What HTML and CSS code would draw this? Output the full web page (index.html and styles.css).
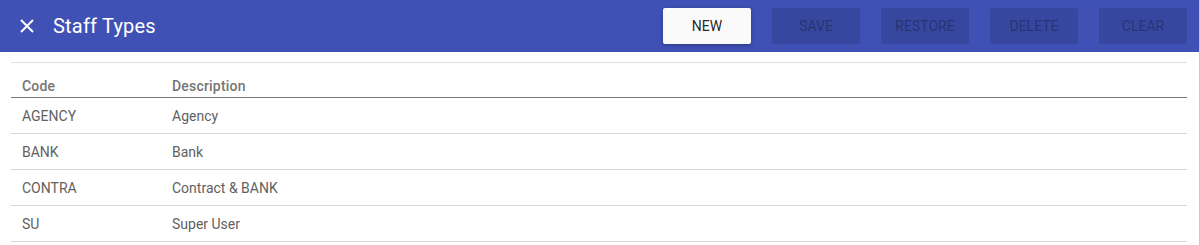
FILE: index.html
```html
<!DOCTYPE html>
<html lang="en">
<head>
    <meta charset="UTF-8">
    <meta name="viewport" content="width=device-width, initial-scale=1.0">
    <title>Staff Types</title>
    <link rel="stylesheet" href="styles.css">
</head>
<body>

<div class="page">
    <div class="toolbar">
        <button class="btn-close" aria-label="Close">
            <svg width="14" height="14" viewBox="0 0 14 14">
                <path d="M1 1 L13 13 M13 1 L1 13" stroke="#fff" stroke-width="2" fill="none"/>
            </svg>
        </button>
        <h1 class="title">Staff Types</h1>
        <div class="actions">
            <button class="btn btn-raised">New</button>
            <button class="btn" disabled>Save</button>
            <button class="btn" disabled>Restore</button>
            <button class="btn" disabled>Delete</button>
            <button class="btn" disabled>Clear</button>
        </div>
    </div>

    <div class="content">
        <table class="grid">
            <thead>
                <tr>
                    <th class="col-code">Code</th>
                    <th>Description</th>
                </tr>
            </thead>
            <tbody>
                <tr><td>AGENCY</td><td>Agency</td></tr>
                <tr><td>BANK</td><td>Bank</td></tr>
                <tr><td>CONTRA</td><td>Contract &amp; BANK</td></tr>
                <tr><td>SU</td><td>Super User</td></tr>
            </tbody>
        </table>
    </div>
</div>

</body>
</html>
```

FILE: styles.css
```css
body {
    margin: 0;
    font-family: Roboto, "Liberation Sans", sans-serif;
    background: #fff;
}
.page {
    width: 1199px;
    height: 245px;
    border-right: 1px solid #c8c8c8;
}
.toolbar {
    display: flex;
    align-items: center;
    height: 52px;
    background-color: #3f51b5;
    padding: 0 12px 0 18px;
    box-sizing: border-box;
}
.btn-close {
    width: 18px;
    height: 18px;
    padding: 0;
    border: none;
    background: none;
    display: flex;
    align-items: center;
    justify-content: center;
}
.title {
    margin: 0 0 0 17px;
    font-size: 20px;
    font-weight: 400;
    letter-spacing: 0.2px;
    color: #fff;
    flex: 1;
}
.actions {
    display: flex;
    gap: 21px;
}
.btn {
    width: 88px;
    height: 36px;
    border: none;
    border-radius: 2px;
    font-family: inherit;
    font-size: 14px;
    font-weight: 400;
    text-transform: uppercase;
    background-color: rgba(0, 0, 0, 0.12);
    color: rgba(0, 0, 0, 0.3);
}
.btn-raised {
    background-color: #fafafa;
    color: rgba(0, 0, 0, 0.87);
    box-shadow: 0 1px 4px rgba(0, 0, 0, 0.3);
}
.content {
    padding: 10px 12px 0 11px;
}
.grid {
    width: 100%;
    border-collapse: collapse;
    border-top: 1px solid #e0e0e0;
    font-size: 14px;
}
.grid th {
    text-align: left;
    font-weight: 500;
    letter-spacing: 0.2px;
    color: #757575;
    height: 35px;
    padding: 0 11px 3px;
    border-bottom: 1px solid #7a7a7a;
    vertical-align: bottom;
    box-sizing: border-box;
}
.grid .col-code {
    width: 150px;
}
.grid td {
    height: 36px;
    padding: 0 11px;
    color: #616161;
    border-bottom: 1px solid #d6d6d6;
    box-sizing: border-box;
}
```
